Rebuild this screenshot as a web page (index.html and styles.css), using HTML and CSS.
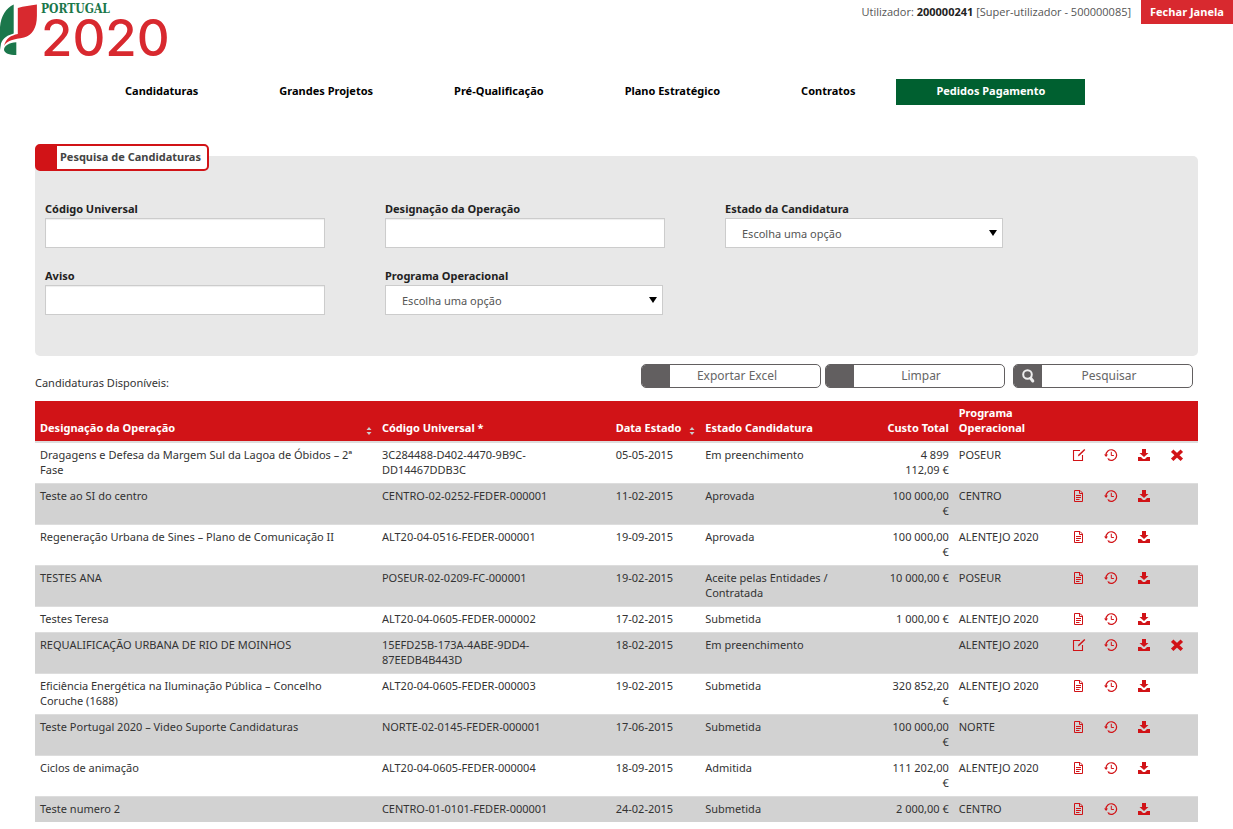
FILE: index.html
```html
<!DOCTYPE html>
<html lang="pt">
<head>
<meta charset="utf-8">
<title>Portugal 2020 - Pesquisa de Candidaturas</title>
<link rel="stylesheet" href="styles.css">
</head>
<body>
<svg class="sprite" aria-hidden="true">
  <symbol id="i-edit" viewBox="0 0 14 14"><path d="M8 2.500H1.500v10h9V7" fill="none" stroke="currentColor" stroke-width="1.100"/><path d="M12.300 1l1 1-5.600 5.600-1.900.8.7-1.900z" fill="currentColor"/></symbol>
  <symbol id="i-doc" viewBox="0 0 14 14"><path d="M2.500 1.500h5.500l2.500 2.500v8.500h-8zM7.500 1.500v3h3" fill="none" stroke="currentColor"/><path d="M4 6.500h5M4 8.500h5M4 10.500h3.500" stroke="currentColor"/></symbol>
  <symbol id="i-hist" viewBox="0 0 14 14"><path d="M2 7.200A5.300 5.300 0 1 1 4.400 11.500" fill="none" stroke="currentColor" stroke-width="1.200"/><path d="M0 6.500h4L2.100 9zM3.300 10.200l2.500.6-1.300 1.500z" fill="currentColor"/><path d="M7.300 3.800v3.700h2.600" fill="none" stroke="currentColor"/></symbol>
  <symbol id="i-down" viewBox="0 0 14 14"><path d="M5 1h4v4h2.500L7 9 2.500 5H5z" fill="currentColor"/><path d="M1 9h3l2 2h2l2-2h3v4H1z" fill="currentColor"/></symbol>
  <symbol id="i-del" viewBox="0 0 14 14"><path d="M3.500 4l7 6.500M10.500 4l-7 6.500" stroke="currentColor" stroke-width="3.600" stroke-linecap="square"/></symbol>
</svg>

<header class="topbar">
  <a class="logo" href="#">
    <svg class="logo-mark" viewBox="0 0 37 57" aria-hidden="true">
      <path d="M13.700 4.500V33.500C8 35 3 38 1 43.500L0 50V27C1 16 6 8 13.700 4.500z" fill="#1b774b"/>
      <path d="M17.800 8C24 6 30 5.500 36.900 4.500V16C36.900 28 32 35.500 24 37.500C14 39.500 7 40 4 46C6 38 11 35.500 17.800 34z" fill="#d8292f"/>
      <path d="M16.300 42.300V55C9 55 4.500 53 4 50C4 45.500 9 43 16.300 42.300z" fill="#1b774b"/>
    </svg>
    <span class="logo-words"><span class="logo-country">PORTUGAL</span><span class="logo-year">2020</span></span>
  </a>
  <div class="session">
    <span>Utilizador: <strong>200000241</strong> [Super-utilizador - 500000085]</span>
    <button class="close" type="button">Fechar Janela</button>
  </div>
</header>

<nav class="menu">
  <a href="#">Candidaturas</a>
  <a href="#">Grandes Projetos</a>
  <a href="#">Pré-Qualificação</a>
  <a href="#">Plano Estratégico</a>
  <a href="#">Contratos</a>
  <a class="active" href="#">Pedidos Pagamento</a>
</nav>

<main>
  <form>
    <section class="panel">
      <h2 class="panel-title">Pesquisa de Candidaturas</h2>
      <div class="fields">
        <div class="field"><label for="codigo">Código Universal</label><input id="codigo" type="text"></div>
        <div class="field"><label for="designacao">Designação da Operação</label><input id="designacao" type="text"></div>
        <div class="field"><label for="estado">Estado da Candidatura</label><div class="select"><select id="estado"><option>Escolha uma opção</option></select></div></div>
        <div class="field"><label for="aviso">Aviso</label><input id="aviso" type="text"></div>
        <div class="field"><label for="programa">Programa Operacional</label><div class="select"><select id="programa"><option>Escolha uma opção</option></select></div></div>
      </div>
    </section>
    <div class="toolbar">
      <p>Candidaturas Disponíveis:</p>
      <div class="actions">
        <button class="action" type="button"><span class="action-icon"></span><span class="action-text">Exportar Excel</span></button>
        <button class="action" type="reset"><span class="action-icon"></span><span class="action-text">Limpar</span></button>
        <button class="action search" type="button"><span class="action-icon"><svg width="14" height="16" viewBox="0 0 14 16" aria-hidden="true"><circle cx="6.500" cy="6.500" r="4.300" fill="none" stroke="#eee" stroke-width="2"/><path d="M9.800 10.300l2 2.700" stroke="#eee" stroke-width="3" stroke-linecap="round"/></svg></span><span class="action-text">Pesquisar</span></button>
      </div>
    </div>
  </form>

  <table class="results">
    <colgroup><col class="c-name"><col class="c-code"><col class="c-date"><col class="c-state"><col class="c-cost"><col class="c-prog"><col class="c-icon"><col class="c-icon"><col class="c-icon"><col class="c-icon"></colgroup>
    <thead>
      <tr>
        <th><span class="sortable">Designação da Operação<svg class="sort" viewBox="0 0 6 8" aria-hidden="true"><path d="M3 0l2.500 3h-5zM3 8l2.500-3h-5z" fill="#ccc"/></svg></span></th>
        <th>Código Universal *</th>
        <th><span class="sortable">Data Estado<svg class="sort" viewBox="0 0 6 8" aria-hidden="true"><path d="M3 0l2.500 3h-5zM3 8l2.500-3h-5z" fill="#ccc"/></svg></span></th>
        <th>Estado Candidatura</th>
        <th class="cost">Custo Total</th>
        <th>Programa Operacional</th>
        <th></th><th></th><th></th><th></th>
      </tr>
    </thead>
    <tbody>
      <tr><td class="name">Dragagens e Defesa da Margem Sul da Lagoa de Óbidos – 2ª Fase</td><td>3C284488-D402-4470-9B9C-DD14467DDB3C</td><td>05-05-2015</td><td>Em preenchimento</td><td class="cost">4 899 112,09&nbsp;€</td><td>POSEUR</td>
        <td><a href="#" aria-label="Editar"><svg><use href="#i-edit"/></svg></a></td><td><a href="#" aria-label="Histórico"><svg><use href="#i-hist"/></svg></a></td><td><a href="#" aria-label="Descarregar"><svg><use href="#i-down"/></svg></a></td><td><a href="#" aria-label="Eliminar"><svg><use href="#i-del"/></svg></a></td></tr>
      <tr><td class="name">Teste ao SI do centro</td><td>CENTRO-02-0252-FEDER-000001</td><td>11-02-2015</td><td>Aprovada</td><td class="cost">100 000,00 €</td><td>CENTRO</td>
        <td><a href="#" aria-label="Consultar"><svg><use href="#i-doc"/></svg></a></td><td><a href="#" aria-label="Histórico"><svg><use href="#i-hist"/></svg></a></td><td><a href="#" aria-label="Descarregar"><svg><use href="#i-down"/></svg></a></td><td></td></tr>
      <tr><td class="name">Regeneração Urbana de Sines – Plano de Comunicação II</td><td>ALT20-04-0516-FEDER-000001</td><td>19-09-2015</td><td>Aprovada</td><td class="cost">100 000,00 €</td><td>ALENTEJO 2020</td>
        <td><a href="#" aria-label="Consultar"><svg><use href="#i-doc"/></svg></a></td><td><a href="#" aria-label="Histórico"><svg><use href="#i-hist"/></svg></a></td><td><a href="#" aria-label="Descarregar"><svg><use href="#i-down"/></svg></a></td><td></td></tr>
      <tr><td class="name">TESTES ANA</td><td>POSEUR-02-0209-FC-000001</td><td>19-02-2015</td><td>Aceite pelas Entidades / Contratada</td><td class="cost">10 000,00 €</td><td>POSEUR</td>
        <td><a href="#" aria-label="Consultar"><svg><use href="#i-doc"/></svg></a></td><td><a href="#" aria-label="Histórico"><svg><use href="#i-hist"/></svg></a></td><td><a href="#" aria-label="Descarregar"><svg><use href="#i-down"/></svg></a></td><td></td></tr>
      <tr><td class="name">Testes Teresa</td><td>ALT20-04-0605-FEDER-000002</td><td>17-02-2015</td><td>Submetida</td><td class="cost">1 000,00 €</td><td>ALENTEJO 2020</td>
        <td><a href="#" aria-label="Consultar"><svg><use href="#i-doc"/></svg></a></td><td><a href="#" aria-label="Histórico"><svg><use href="#i-hist"/></svg></a></td><td><a href="#" aria-label="Descarregar"><svg><use href="#i-down"/></svg></a></td><td></td></tr>
      <tr><td class="name">REQUALIFICAÇÃO URBANA DE RIO DE MOINHOS</td><td>15EFD25B-173A-4ABE-9DD4-87EEDB4B443D</td><td>18-02-2015</td><td>Em preenchimento</td><td class="cost"></td><td>ALENTEJO 2020</td>
        <td><a href="#" aria-label="Editar"><svg><use href="#i-edit"/></svg></a></td><td><a href="#" aria-label="Histórico"><svg><use href="#i-hist"/></svg></a></td><td><a href="#" aria-label="Descarregar"><svg><use href="#i-down"/></svg></a></td><td><a href="#" aria-label="Eliminar"><svg><use href="#i-del"/></svg></a></td></tr>
      <tr><td class="name">Eficiência Energética na Iluminação Pública – Concelho Coruche (1688)</td><td>ALT20-04-0605-FEDER-000003</td><td>19-02-2015</td><td>Submetida</td><td class="cost">320 852,20 €</td><td>ALENTEJO 2020</td>
        <td><a href="#" aria-label="Consultar"><svg><use href="#i-doc"/></svg></a></td><td><a href="#" aria-label="Histórico"><svg><use href="#i-hist"/></svg></a></td><td><a href="#" aria-label="Descarregar"><svg><use href="#i-down"/></svg></a></td><td></td></tr>
      <tr><td class="name">Teste Portugal 2020 – Video Suporte Candidaturas</td><td>NORTE-02-0145-FEDER-000001</td><td>17-06-2015</td><td>Submetida</td><td class="cost">100 000,00 €</td><td>NORTE</td>
        <td><a href="#" aria-label="Consultar"><svg><use href="#i-doc"/></svg></a></td><td><a href="#" aria-label="Histórico"><svg><use href="#i-hist"/></svg></a></td><td><a href="#" aria-label="Descarregar"><svg><use href="#i-down"/></svg></a></td><td></td></tr>
      <tr><td class="name">Ciclos de animação</td><td>ALT20-04-0605-FEDER-000004</td><td>18-09-2015</td><td>Admitida</td><td class="cost">111 202,00 €</td><td>ALENTEJO 2020</td>
        <td><a href="#" aria-label="Consultar"><svg><use href="#i-doc"/></svg></a></td><td><a href="#" aria-label="Histórico"><svg><use href="#i-hist"/></svg></a></td><td><a href="#" aria-label="Descarregar"><svg><use href="#i-down"/></svg></a></td><td></td></tr>
      <tr><td class="name">Teste numero 2</td><td>CENTRO-01-0101-FEDER-000001</td><td>24-02-2015</td><td>Submetida</td><td class="cost">2 000,00 €</td><td>CENTRO</td>
        <td><a href="#" aria-label="Consultar"><svg><use href="#i-doc"/></svg></a></td><td><a href="#" aria-label="Histórico"><svg><use href="#i-hist"/></svg></a></td><td><a href="#" aria-label="Descarregar"><svg><use href="#i-down"/></svg></a></td><td></td></tr>
    </tbody>
  </table>
</main>
</body>
</html>
```

FILE: styles.css
```css
* { box-sizing: border-box; }
body { margin: 0; background: #fff; color: #333; font: 11px/15px "Noto Sans", "Open Sans", sans-serif; }
button, input, select { font: inherit; }
a { color: inherit; text-decoration: none; }
.sprite { display: none; }

.topbar { display: flex; justify-content: space-between; align-items: flex-start; height: 79px; }
.logo { display: flex; gap: 4px; }
.logo-mark { width: 37px; height: 57px; }
.logo-words { display: flex; flex-direction: column; padding-top: 3px; }
.logo-country { color: #1b774b; font: bold 12px/12px "DejaVu Serif Condensed", "DejaVu Serif", serif; }
.logo-year { color: #d8292f; font: 500 51px/46px Inter, sans-serif; }
.session { display: flex; align-items: center; gap: 10px; color: #555; font-family: "Open Sans", sans-serif; }
.session strong { color: #222; }
.close { height: 24px; padding: 0 9px 2px; border: 0; background: #d8292f; color: #fff; font-size: 11px; font-weight: bold; white-space: nowrap; }
.session > span { padding-bottom: 2px; }

.menu { display: flex; gap: 1px; padding-left: 85px; color: #000; font-weight: bold; }
.menu a { padding: 0 40px 2px; line-height: 24px; white-space: nowrap; }
.menu .active { background: #006030; color: #fff; }

main { padding: 51px 35px 7px; }
.panel { height: 200px; padding: 0 10px; background: #e8e8e8; border-radius: 5px; }
.panel-title { width: max-content; height: 27px; margin: 0 -10px; border: 2px solid #d11317; border-left-width: 22px; border-radius: 5px; background: #fff; color: #444; font-size: 11px; line-height: 21px; padding: 0 6px 0 3px; position: relative; top: -12px; }
.fields { display: grid; grid-template-columns: repeat(3, minmax(0, 280px)); gap: 20px 60px; padding-top: 18px; }
.field label { display: block; padding-bottom: 2px; color: #222; font-weight: bold; }
.field input { display: block; width: 100%; height: 30px; border: 1px solid #ccc; background: #fff; box-shadow: inset 0 1px 1px #eee; padding: 0 8px; }
.select { position: relative; margin-right: 2px; }
.select::after { content: ""; position: absolute; right: 6px; top: 12px; border: solid transparent; border-width: 6px 4px 0; border-top-color: #000; pointer-events: none; }
.select select { appearance: none; display: block; width: 100%; height: 30px; padding: 0 16px; border: 1px solid #ccc; border-radius: 0; background: #fff; color: #555; }

.toolbar { display: flex; justify-content: space-between; height: 45px; padding: 8px 5px 0 0; }
.toolbar p { margin: 11px 0 0; }
.actions { display: flex; gap: 4px; }
.action { display: flex; width: 180px; height: 24px; padding: 0; overflow: hidden; border: 1px solid #625f60; border-radius: 5px; background: #fff; color: #666; font-size: 12px; }
.search { margin-left: 4px; }
.action-icon { display: flex; align-items: center; justify-content: center; width: 28px; height: 22px; background: #625f60; }
.action-text { flex: 1; line-height: 22px; padding-right: 16px; }

.results { width: 100%; table-layout: fixed; border-collapse: collapse; }
.c-name { width: 29.4%; }
.c-code { width: 20.1%; }
.c-date { width: 7.7%; }
.c-state { width: 15.6%; }
.c-cost { width: 6.2%; }
.c-prog { width: 9.7%; }
.results th { padding: 4px 5px 6px; background: #d11317; color: #fff; text-align: left; vertical-align: bottom; border-bottom: 2px solid #ddd; }
.results td { padding: 4px 5px 6px; vertical-align: top; border-top: 1px solid #ddd; }
.results td.name { padding-right: 12px; }
.results tbody tr:nth-child(even) { background: #d2d2d2; }
.results .cost { text-align: right; }
th.cost { white-space: nowrap; }
.sortable { display: flex; justify-content: space-between; align-items: flex-end; white-space: nowrap; }
.sort { width: 6px; height: 8px; }
.results td svg { display: block; width: 14px; height: 14px; margin-top: 1px; color: #d11317; }
```
